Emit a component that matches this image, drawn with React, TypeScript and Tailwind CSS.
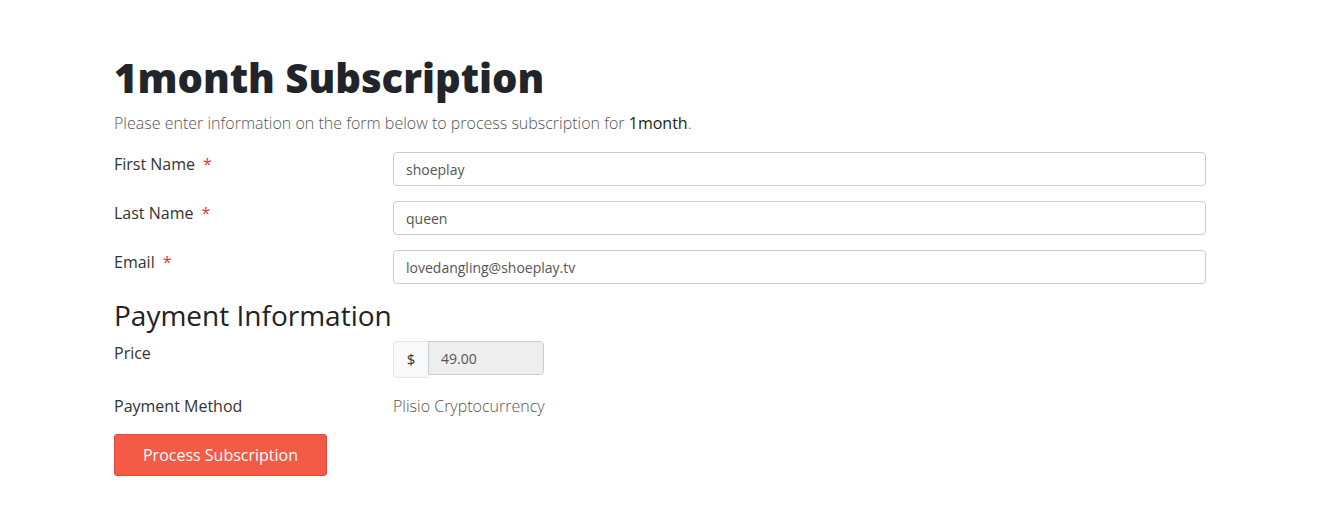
import React from "react";

const font = { fontFamily: '"Open Sans", "Noto Sans", sans-serif' };

function Row({ label, required, children, className = "" }: { label: string; required?: boolean; children: React.ReactNode; className?: string }) {
  return (
    <div className={`flex ${className}`}>
      <div className="w-[279px] shrink-0 text-[16px] leading-[24px] text-[#333] pt-[0px]">
        {label}
        {required && <span className="text-[#e3342f] ml-[8px]">*</span>}
      </div>
      <div className="flex-1">{children}</div>
    </div>
  );
}

function Input({ value }: { value: string }) {
  return (
    <div className="h-[34px] w-full border border-[#cccccc] rounded-[4px] bg-white px-[12px] flex items-center text-[14px] text-[#555]">
      {value}
    </div>
  );
}

export default function App() {
  return (
    <div className="min-h-[524px] bg-white" style={font}>
      <div className="ml-[114px] w-[1092px] pt-[50px]">
        <h1 className="text-[40px] leading-[56px] font-extrabold text-[#212529]">1month Subscription</h1>
        <p className="mt-[5px] text-[16px] leading-[24px] font-light text-[#555]">
          Please enter information on the form below to process subscription for <span className="font-normal text-[#222]">1month</span>.
        </p>
        <Row label="First Name" required className="mt-[17px]">
          <Input value="shoeplay" />
        </Row>
        <Row label="Last Name" required className="mt-[15px]">
          <Input value="queen" />
        </Row>
        <Row label="Email" required className="mt-[15px]">
          <Input value="lovedangling@shoeplay.tv" />
        </Row>
        <h2 className="mt-[13px] text-[28px] leading-[36px] font-normal text-[#222]">Payment Information</h2>
        <Row label="Price" className="mt-[8px]">
          <div className="flex">
            <div className="h-[37px] w-[35px] flex items-center justify-center border border-[#e5e5e5] border-r-0 rounded-l-[4px] bg-[#f8f9fa] text-[15px] text-[#333]">$</div>
            <div className="h-[34px] w-[116px] border border-[#cccccc] rounded-r-[4px] bg-[#eeeeee] px-[12px] flex items-center text-[14px] text-[#555]">49.00</div>
          </div>
        </Row>
        <Row label="Payment Method" className="mt-[16px]">
          <div className="text-[16px] leading-[24px] font-light text-[#555]">Plisio Cryptocurrency</div>
        </Row>
        <button className="mt-[16px] h-[42px] w-[213px] rounded-[3px] bg-[#f45b46] border border-[#e04a36] text-white text-[16px] font-normal">
          Process Subscription
        </button>
      </div>
    </div>
  );
}
